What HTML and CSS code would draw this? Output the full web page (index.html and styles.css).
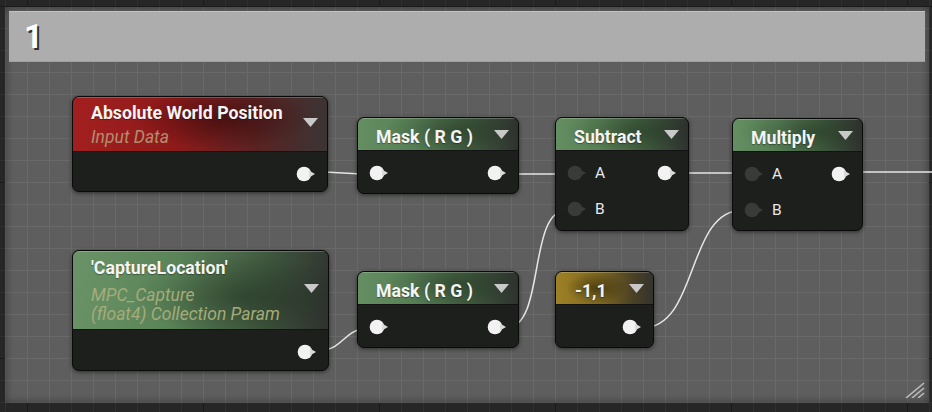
FILE: index.html
```html
<!DOCTYPE html>
<html>
<head>
<meta charset="utf-8">
<link rel="stylesheet" href="styles.css">
</head>
<body>
  <div class="comment">
    <div class="comment-title">1</div>
    <svg class="resize" width="20" height="16" viewBox="0 0 20 16"><g stroke="#bdbdbd" stroke-width="1.6"><line x1="1" y1="16" x2="19" y2="1"/><line x1="7" y1="16" x2="19" y2="6"/><line x1="13" y1="16" x2="19" y2="11"/></g></svg>
  </div>

  <div class="canvas">
    <svg class="wires" width="932" height="412" viewBox="0 0 932 412">
      <g fill="none" stroke="#e6e6e6" stroke-width="1.5">
        <path d="M316 172 C342 172, 344 174, 370 174"/>
        <path d="M506 174 L567 174"/>
        <path d="M676 173 L743 173"/>
        <path d="M851 172 L932 172"/>
        <path d="M317 351 C344 351, 343 328, 370 328"/>
        <path d="M506 328 C546 328, 527 210, 567 210"/>
        <path d="M642 328 C699 328, 686 210, 743 210"/>
      </g>
    </svg>

    <div class="node n-awp">
      <div class="hdr red">
        <div class="hdr-text">
          <div class="title">Absolute World Position</div>
          <div class="sub sub-red">Input Data</div>
        </div>
        <svg class="caret" width="15" height="9" viewBox="0 0 15 9"><polygon points="0,0 15,0 7.5,9" fill="#c9c9c9"/></svg>
      </div>
      <div class="nbody">
        <div class="row out"><svg class="pin" width="20" height="16" viewBox="0 0 20 16"><circle cx="8" cy="8" r="7.3" fill="#f2f2f2"/><polygon points="13,4.5 19,8 13,11.5" fill="#d9d9d9"/></svg></div>
      </div>
    </div>

    <div class="node n-mask1">
      <div class="hdr green">
        <div class="hdr-text"><div class="title">Mask ( R G )</div></div>
        <svg class="caret" width="15" height="9" viewBox="0 0 15 9"><polygon points="0,0 15,0 7.5,9" fill="#c9c9c9"/></svg>
      </div>
      <div class="nbody">
        <div class="row both">
          <svg class="pin" width="20" height="16" viewBox="0 0 20 16"><circle cx="8" cy="8" r="7.3" fill="#f2f2f2"/><polygon points="13,4.5 19,8 13,11.5" fill="#d9d9d9"/></svg>
          <svg class="pin" width="20" height="16" viewBox="0 0 20 16"><circle cx="8" cy="8" r="7.3" fill="#f2f2f2"/><polygon points="13,4.5 19,8 13,11.5" fill="#d9d9d9"/></svg>
        </div>
      </div>
    </div>

    <div class="node n-sub">
      <div class="hdr green">
        <div class="hdr-text"><div class="title">Subtract</div></div>
        <svg class="caret" width="15" height="9" viewBox="0 0 15 9"><polygon points="0,0 15,0 7.5,9" fill="#c9c9c9"/></svg>
      </div>
      <div class="nbody">
        <div class="row both">
          <div class="in"><svg class="pin" width="20" height="16" viewBox="0 0 20 16"><circle cx="8" cy="8" r="7.3" fill="#393a39"/><polygon points="13,4.5 19,8 13,11.5" fill="#393a39"/></svg><span class="lbl">A</span></div>
          <svg class="pin" width="20" height="16" viewBox="0 0 20 16"><circle cx="8" cy="8" r="7.3" fill="#f2f2f2"/><polygon points="13,4.5 19,8 13,11.5" fill="#d9d9d9"/></svg>
        </div>
        <div class="row both">
          <div class="in"><svg class="pin" width="20" height="16" viewBox="0 0 20 16"><circle cx="8" cy="8" r="7.3" fill="#393a39"/><polygon points="13,4.5 19,8 13,11.5" fill="#393a39"/></svg><span class="lbl">B</span></div>
        </div>
      </div>
    </div>

    <div class="node n-mul">
      <div class="hdr green">
        <div class="hdr-text"><div class="title">Multiply</div></div>
        <svg class="caret" width="15" height="9" viewBox="0 0 15 9"><polygon points="0,0 15,0 7.5,9" fill="#c9c9c9"/></svg>
      </div>
      <div class="nbody">
        <div class="row both">
          <div class="in"><svg class="pin" width="20" height="16" viewBox="0 0 20 16"><circle cx="8" cy="8" r="7.3" fill="#393a39"/><polygon points="13,4.5 19,8 13,11.5" fill="#393a39"/></svg><span class="lbl">A</span></div>
          <svg class="pin" width="20" height="16" viewBox="0 0 20 16"><circle cx="8" cy="8" r="7.3" fill="#f2f2f2"/><polygon points="13,4.5 19,8 13,11.5" fill="#d9d9d9"/></svg>
        </div>
        <div class="row both">
          <div class="in"><svg class="pin" width="20" height="16" viewBox="0 0 20 16"><circle cx="8" cy="8" r="7.3" fill="#393a39"/><polygon points="13,4.5 19,8 13,11.5" fill="#393a39"/></svg><span class="lbl">B</span></div>
        </div>
      </div>
    </div>

    <div class="node n-cap">
      <div class="hdr green-big">
        <div class="hdr-text">
          <div class="title">'CaptureLocation'</div>
          <div class="sub sub-green">MPC_Capture<br>(float4) Collection Param</div>
        </div>
        <svg class="caret" width="15" height="9" viewBox="0 0 15 9"><polygon points="0,0 15,0 7.5,9" fill="#c9c9c9"/></svg>
      </div>
      <div class="nbody">
        <div class="row out"><svg class="pin" width="20" height="16" viewBox="0 0 20 16"><circle cx="8" cy="8" r="7.3" fill="#f2f2f2"/><polygon points="13,4.5 19,8 13,11.5" fill="#d9d9d9"/></svg></div>
      </div>
    </div>

    <div class="node n-mask2">
      <div class="hdr green">
        <div class="hdr-text"><div class="title">Mask ( R G )</div></div>
        <svg class="caret" width="15" height="9" viewBox="0 0 15 9"><polygon points="0,0 15,0 7.5,9" fill="#c9c9c9"/></svg>
      </div>
      <div class="nbody">
        <div class="row both">
          <svg class="pin" width="20" height="16" viewBox="0 0 20 16"><circle cx="8" cy="8" r="7.3" fill="#f2f2f2"/><polygon points="13,4.5 19,8 13,11.5" fill="#d9d9d9"/></svg>
          <svg class="pin" width="20" height="16" viewBox="0 0 20 16"><circle cx="8" cy="8" r="7.3" fill="#f2f2f2"/><polygon points="13,4.5 19,8 13,11.5" fill="#d9d9d9"/></svg>
        </div>
      </div>
    </div>

    <div class="node n-neg">
      <div class="hdr gold">
        <div class="hdr-text"><div class="title">-1,1</div></div>
        <svg class="caret" width="15" height="9" viewBox="0 0 15 9"><polygon points="0,0 15,0 7.5,9" fill="#c9c9c9"/></svg>
      </div>
      <div class="nbody">
        <div class="row out"><svg class="pin" width="20" height="16" viewBox="0 0 20 16"><circle cx="8" cy="8" r="7.3" fill="#f2f2f2"/><polygon points="13,4.5 19,8 13,11.5" fill="#d9d9d9"/></svg></div>
      </div>
    </div>
  </div>
</body>
</html>
```
FILE: styles.css
```css
* { box-sizing: border-box; }

html, body { margin: 0; }

body {
  position: relative;
  width: 932px;
  height: 412px;
  overflow: hidden;
  padding: 7px 3px 9px 5px;
  font-family: Roboto, "Liberation Sans", sans-serif;
  background-color: #262626;
  background-image:
    linear-gradient(to right, #1b1b1b 1px, transparent 1px),
    linear-gradient(to bottom, #1b1b1b 1px, transparent 1px),
    linear-gradient(to right, #303030 1px, transparent 1px),
    linear-gradient(to bottom, #303030 1px, transparent 1px);
  background-size: 176px 176px, 176px 176px, 22px 22px, 22px 22px;
  background-position: 27px 6px, 27px 6px, 5px 6px, 5px 6px;
}

.comment {
  position: relative;
  height: 396px;
  padding: 4px;
  background-color: #5e5e5e;
  background-image:
    linear-gradient(to right, #696969 1px, transparent 1px),
    linear-gradient(to bottom, #696969 1px, transparent 1px);
  background-size: 22px 22px;
  background-position: 0 21px;
  box-shadow: inset 0 0 9px rgba(0, 0, 0, 0.45);
}

.comment-title {
  height: 51px;
  display: flex;
  align-items: center;
  padding-left: 15px;
  background: #adadad;
  border-top: 1px solid #c2c2c2;
  border-bottom: 1px solid #a0a0a0;
  color: #ffffff;
  font-family: Roboto, "Liberation Sans", sans-serif;
  font-weight: 700;
  font-size: 33px;
  line-height: 1;
  text-shadow: 2px 2px 0 #2e2e2e;
}

.resize {
  position: absolute;
  right: 4px;
  bottom: 5px;
}

.canvas {
  position: absolute;
  inset: 0;
}

.wires {
  position: absolute;
  left: 0;
  top: 0;
}

.node {
  position: absolute;
  display: flex;
  flex-direction: column;
  background: #1d1f1d;
  border: 1px solid #0a0a0a;
  border-radius: 7px;
  overflow: hidden;
  box-shadow: 0 1px 4px rgba(0, 0, 0, 0.55);
}

.n-awp   { left: 72px;  top: 96px;  width: 256px; height: 96px; }
.n-mask1 { left: 357px; top: 117px; width: 162px; height: 77px; }
.n-sub   { left: 555px; top: 117px; width: 134px; height: 114px; }
.n-mul   { left: 732px; top: 118px; width: 131px; height: 113px; }
.n-cap   { left: 72px;  top: 250px; width: 257px; height: 121px; }
.n-mask2 { left: 357px; top: 271px; width: 162px; height: 77px; }
.n-neg   { left: 555px; top: 271px; width: 99px;  height: 77px; }

.hdr {
  flex: none;
  height: 33px;
  display: flex;
  align-items: flex-start;
  padding: 9px 9px 0 18px;
  border-bottom: 1px solid #121312;
  box-shadow: inset 0 1px 0 rgba(255, 255, 255, 0.22);
}

.hdr-text { flex: 1; min-width: 0; }

.title {
  color: #f4f4f4;
  font-weight: 700;
  font-size: 17.7px;
  line-height: 20px;
  white-space: nowrap;
  text-shadow: 0 1px 1px rgba(0, 0, 0, 0.35);
}

.caret { flex: none; margin-top: 3px; }

.red {
  height: 55px;
  padding-top: 6px;
  background:
    radial-gradient(ellipse 90px 30px at 150px 22px, rgba(45, 5, 5, 0.55), transparent),
    linear-gradient(90deg, #a31f1f 0%, #8e1a1a 40%, #5a2222 72%, #3b3434 100%);
}
.red .caret { margin-top: 15px; }

.green {
  background:
    radial-gradient(ellipse 70px 22px at 60% 40%, rgba(20, 30, 20, 0.35), transparent),
    linear-gradient(90deg, #648f62 0%, #577f55 35%, #3e5a3d 70%, #2f322f 100%);
}

.green-big {
  height: 79px;
  padding-top: 7px;
  background:
    radial-gradient(ellipse 110px 40px at 170px 45px, rgba(20, 30, 20, 0.4), transparent),
    linear-gradient(100deg, #6a9468 0%, #5a8358 40%, #3e553d 75%, #2e312e 100%);
}
.green-big .caret { margin-top: 26px; }

.gold {
  background:
    radial-gradient(ellipse 30px 16px at 40px 16px, rgba(40, 30, 5, 0.55), transparent),
    linear-gradient(90deg, #9e8126 0%, #7e6820 45%, #4a4024 80%, #34332d 100%);
}
.gold .title { padding-left: 1px; }

.sub {
  font-style: italic;
  font-size: 17.5px;
  line-height: 19px;
  white-space: nowrap;
}
.sub-red { color: #b48e6f; margin-top: 5px; }
.sub-green { color: #a5ab7a; margin-top: 8px; }

.nbody {
  flex: 1;
  padding-top: 4px;
}

.row {
  height: 36px;
  display: flex;
  align-items: center;
  padding: 0 11px;
}
.row.out { justify-content: flex-end; }
.row.both { justify-content: space-between; }

.in {
  display: flex;
  align-items: center;
  gap: 8px;
}

.pin { display: block; flex: none; }

.lbl {
  color: #e8e8e8;
  font-size: 15.5px;
  line-height: 18px;
}
```
